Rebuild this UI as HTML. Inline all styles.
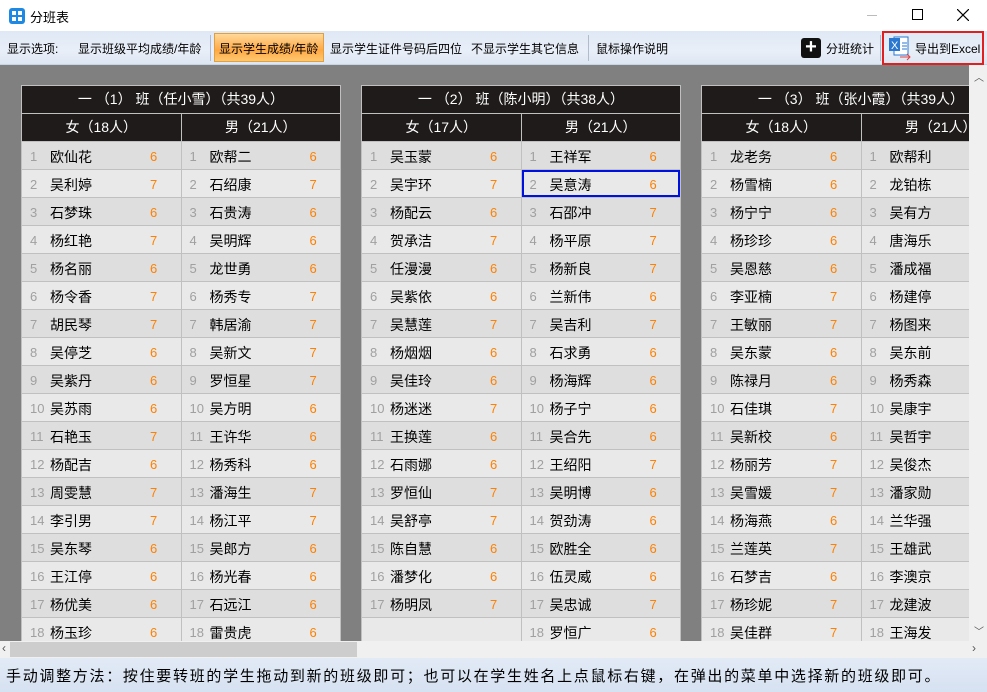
<!DOCTYPE html>
<html><head><meta charset="utf-8"><style>
*{margin:0;padding:0;box-sizing:border-box}
body{width:987px;height:692px;overflow:hidden;font-family:"Liberation Sans","Noto Sans CJK SC",sans-serif;background:#fff;position:relative;font-size:13px;color:#000}
i{font-style:normal}
.title{position:absolute;left:0;top:0;width:987px;height:31px;background:#fff}
.tb{position:absolute;left:0;top:31px;width:987px;height:34px;background:linear-gradient(#dfe8f5,#e9eff8 60%,#dde6f3);border-bottom:1px solid #c8d3e3}
.tb span{position:absolute;top:9px;font-size:12px;white-space:nowrap}
.area{position:absolute;left:0;top:65px;width:969px;height:576px;background:#808080;overflow:hidden}
.p{position:absolute;top:20px;width:320px;background:#c0c0c0;padding:1px;display:flex;flex-direction:column;gap:1px}
.h{height:27px;background:#1f1b1a;color:#fff;font-size:14px;text-align:center;line-height:27px;white-space:nowrap}
.r{display:flex;gap:1px;height:27px}
.r>div{flex:1;position:relative;background:#dedede}
.r:nth-child(even)>div{background:#e9e9e9}
.sh>div{background:#1f1b1a!important;color:#fff;text-align:center;line-height:27px;font-size:14px}
.n{position:absolute;left:8px;top:7px;color:#a0a0a0;font-size:13px}
.m{position:absolute;left:28px;top:5px;font-size:14px}
.s{position:absolute;left:128px;top:7px;color:#ff8000;font-size:13px}
.vs{position:absolute;left:969px;top:65px;width:18px;height:576px;background:#f0f0f0}
.hs{position:absolute;left:0;top:641px;width:987px;height:17px;background:#f0f0f0}
.st{position:absolute;left:0;top:658px;width:987px;height:34px;background:linear-gradient(#e2eaf6,#d6e1f1);font-size:15px;letter-spacing:1.7px;padding:7px 0 0 6px;white-space:nowrap}
</style></head><body>
<div class="title">
<svg style="position:absolute;left:9px;top:8px" width="16" height="16"><rect width="16" height="16" rx="3" fill="#1e88e5"/><rect x="3" y="3" width="4" height="4" fill="#fff"/><rect x="9" y="3" width="4" height="4" fill="#fff"/><rect x="3" y="9" width="4" height="4" fill="#fff"/><rect x="9" y="9" width="4" height="4" fill="#fff"/></svg>
<span style="position:absolute;left:30px;top:7px;font-size:13px">分班表</span>
<div style="position:absolute;left:867px;top:15px;width:10px;height:1px;background:#bbb"></div>
<div style="position:absolute;left:912px;top:9px;width:11px;height:11px;border:1px solid #000"></div>
<svg style="position:absolute;left:957px;top:9px" width="12" height="12"><path d="M0 0L12 12M12 0L0 12" stroke="#000" stroke-width="1.2"/></svg>
</div>
<div class="tb">
<span style="left:7px">显示选项:</span>
<span style="left:78px">显示班级平均成绩/年龄</span>
<div style="position:absolute;left:210px;top:4px;width:1px;height:26px;background:#b0bccc"></div>
<div style="position:absolute;left:214px;top:2px;width:110px;height:29px;background:linear-gradient(#ffd89a,#ffa844 60%,#ffc870);border:1px solid #e0a040"></div>
<span style="left:219px">显示学生成绩/年龄</span>
<span style="left:330px">显示学生证件号码后四位</span>
<span style="left:471px">不显示学生其它信息</span>
<div style="position:absolute;left:588px;top:4px;width:1px;height:26px;background:#b0bccc"></div>
<span style="left:596px">鼠标操作说明</span>
<div style="position:absolute;left:801px;top:7px;width:20px;height:20px;background:#111;border-radius:3px;color:#fff;font-size:20px;line-height:19px;text-align:center;font-weight:bold">+</div>
<span style="left:826px">分班统计</span>
<div style="position:absolute;left:880px;top:4px;width:1px;height:26px;background:#b0bccc"></div>
<div style="position:absolute;left:882px;top:0px;width:102px;height:34px;border:2px solid #e02020"></div>
<svg style="position:absolute;left:888px;top:4px" width="26" height="26"><rect x="6" y="2" width="14" height="18" fill="#fff" stroke="#2a78d0"/><rect x="1" y="3" width="11" height="13" fill="#2a78d0"/><text x="3" y="14" fill="#fff" font-size="11" font-family="Liberation Sans">X</text><path d="M14 8h5M14 11h5M14 14h5" stroke="#2a78d0"/><path d="M12 22h10M19 19l3 3-3 3" stroke="#e04040" fill="none"/></svg>
<span style="left:915px">导出到Excel</span>
</div>
<div class="area">
<div class="p" style="left:21px">
<div class="h">一 （1） 班（任小雪）（共39人）</div>
<div class="r sh"><div>女（18人）</div><div>男（21人）</div></div>
<div class="r"><div><i class="n">1</i><span class="m">欧仙花</span><i class="s">6</i></div><div><i class="n">1</i><span class="m">欧帮二</span><i class="s">6</i></div></div>
<div class="r"><div><i class="n">2</i><span class="m">吴利婷</span><i class="s">7</i></div><div><i class="n">2</i><span class="m">石绍康</span><i class="s">7</i></div></div>
<div class="r"><div><i class="n">3</i><span class="m">石梦珠</span><i class="s">6</i></div><div><i class="n">3</i><span class="m">石贵涛</span><i class="s">6</i></div></div>
<div class="r"><div><i class="n">4</i><span class="m">杨红艳</span><i class="s">7</i></div><div><i class="n">4</i><span class="m">吴明辉</span><i class="s">6</i></div></div>
<div class="r"><div><i class="n">5</i><span class="m">杨名丽</span><i class="s">6</i></div><div><i class="n">5</i><span class="m">龙世勇</span><i class="s">6</i></div></div>
<div class="r"><div><i class="n">6</i><span class="m">杨令香</span><i class="s">7</i></div><div><i class="n">6</i><span class="m">杨秀专</span><i class="s">7</i></div></div>
<div class="r"><div><i class="n">7</i><span class="m">胡民琴</span><i class="s">7</i></div><div><i class="n">7</i><span class="m">韩居渝</span><i class="s">7</i></div></div>
<div class="r"><div><i class="n">8</i><span class="m">吴停芝</span><i class="s">6</i></div><div><i class="n">8</i><span class="m">吴新文</span><i class="s">7</i></div></div>
<div class="r"><div><i class="n">9</i><span class="m">吴紫丹</span><i class="s">6</i></div><div><i class="n">9</i><span class="m">罗恒星</span><i class="s">7</i></div></div>
<div class="r"><div><i class="n">10</i><span class="m">吴苏雨</span><i class="s">6</i></div><div><i class="n">10</i><span class="m">吴方明</span><i class="s">6</i></div></div>
<div class="r"><div><i class="n">11</i><span class="m">石艳玉</span><i class="s">7</i></div><div><i class="n">11</i><span class="m">王许华</span><i class="s">6</i></div></div>
<div class="r"><div><i class="n">12</i><span class="m">杨配吉</span><i class="s">6</i></div><div><i class="n">12</i><span class="m">杨秀科</span><i class="s">6</i></div></div>
<div class="r"><div><i class="n">13</i><span class="m">周雯慧</span><i class="s">7</i></div><div><i class="n">13</i><span class="m">潘海生</span><i class="s">7</i></div></div>
<div class="r"><div><i class="n">14</i><span class="m">李引男</span><i class="s">7</i></div><div><i class="n">14</i><span class="m">杨江平</span><i class="s">7</i></div></div>
<div class="r"><div><i class="n">15</i><span class="m">吴东琴</span><i class="s">6</i></div><div><i class="n">15</i><span class="m">吴郎方</span><i class="s">6</i></div></div>
<div class="r"><div><i class="n">16</i><span class="m">王江停</span><i class="s">6</i></div><div><i class="n">16</i><span class="m">杨光春</span><i class="s">6</i></div></div>
<div class="r"><div><i class="n">17</i><span class="m">杨优美</span><i class="s">6</i></div><div><i class="n">17</i><span class="m">石远江</span><i class="s">6</i></div></div>
<div class="r"><div><i class="n">18</i><span class="m">杨玉珍</span><i class="s">6</i></div><div><i class="n">18</i><span class="m">雷贵虎</span><i class="s">6</i></div></div>
</div>
<div class="p" style="left:361px">
<div class="h">一 （2） 班（陈小明）（共38人）</div>
<div class="r sh"><div>女（17人）</div><div>男（21人）</div></div>
<div class="r"><div><i class="n">1</i><span class="m">吴玉蒙</span><i class="s">6</i></div><div><i class="n">1</i><span class="m">王祥军</span><i class="s">6</i></div></div>
<div class="r"><div><i class="n">2</i><span class="m">吴宇环</span><i class="s">7</i></div><div style="outline:2px solid #0010e0;outline-offset:-2px"><i class="n">2</i><span class="m">吴意涛</span><i class="s">6</i></div></div>
<div class="r"><div><i class="n">3</i><span class="m">杨配云</span><i class="s">6</i></div><div><i class="n">3</i><span class="m">石邵冲</span><i class="s">7</i></div></div>
<div class="r"><div><i class="n">4</i><span class="m">贺承洁</span><i class="s">7</i></div><div><i class="n">4</i><span class="m">杨平原</span><i class="s">7</i></div></div>
<div class="r"><div><i class="n">5</i><span class="m">任漫漫</span><i class="s">6</i></div><div><i class="n">5</i><span class="m">杨新良</span><i class="s">7</i></div></div>
<div class="r"><div><i class="n">6</i><span class="m">吴紫依</span><i class="s">6</i></div><div><i class="n">6</i><span class="m">兰新伟</span><i class="s">6</i></div></div>
<div class="r"><div><i class="n">7</i><span class="m">吴慧莲</span><i class="s">7</i></div><div><i class="n">7</i><span class="m">吴吉利</span><i class="s">7</i></div></div>
<div class="r"><div><i class="n">8</i><span class="m">杨烟烟</span><i class="s">6</i></div><div><i class="n">8</i><span class="m">石求勇</span><i class="s">6</i></div></div>
<div class="r"><div><i class="n">9</i><span class="m">吴佳玲</span><i class="s">6</i></div><div><i class="n">9</i><span class="m">杨海辉</span><i class="s">6</i></div></div>
<div class="r"><div><i class="n">10</i><span class="m">杨迷迷</span><i class="s">7</i></div><div><i class="n">10</i><span class="m">杨子宁</span><i class="s">6</i></div></div>
<div class="r"><div><i class="n">11</i><span class="m">王换莲</span><i class="s">6</i></div><div><i class="n">11</i><span class="m">吴合先</span><i class="s">6</i></div></div>
<div class="r"><div><i class="n">12</i><span class="m">石雨娜</span><i class="s">6</i></div><div><i class="n">12</i><span class="m">王绍阳</span><i class="s">7</i></div></div>
<div class="r"><div><i class="n">13</i><span class="m">罗恒仙</span><i class="s">7</i></div><div><i class="n">13</i><span class="m">吴明博</span><i class="s">6</i></div></div>
<div class="r"><div><i class="n">14</i><span class="m">吴舒亭</span><i class="s">7</i></div><div><i class="n">14</i><span class="m">贺劲涛</span><i class="s">6</i></div></div>
<div class="r"><div><i class="n">15</i><span class="m">陈自慧</span><i class="s">6</i></div><div><i class="n">15</i><span class="m">欧胜全</span><i class="s">6</i></div></div>
<div class="r"><div><i class="n">16</i><span class="m">潘梦化</span><i class="s">6</i></div><div><i class="n">16</i><span class="m">伍灵威</span><i class="s">6</i></div></div>
<div class="r"><div><i class="n">17</i><span class="m">杨明凤</span><i class="s">7</i></div><div><i class="n">17</i><span class="m">吴忠诚</span><i class="s">7</i></div></div>
<div class="r"><div></div><div><i class="n">18</i><span class="m">罗恒广</span><i class="s">6</i></div></div>
</div>
<div class="p" style="left:701px">
<div class="h">一 （3） 班（张小霞）（共39人）</div>
<div class="r sh"><div>女（18人）</div><div>男（21人）</div></div>
<div class="r"><div><i class="n">1</i><span class="m">龙老务</span><i class="s">6</i></div><div><i class="n">1</i><span class="m">欧帮利</span></div></div>
<div class="r"><div><i class="n">2</i><span class="m">杨雪楠</span><i class="s">6</i></div><div><i class="n">2</i><span class="m">龙铂栋</span></div></div>
<div class="r"><div><i class="n">3</i><span class="m">杨宁宁</span><i class="s">6</i></div><div><i class="n">3</i><span class="m">吴有方</span></div></div>
<div class="r"><div><i class="n">4</i><span class="m">杨珍珍</span><i class="s">6</i></div><div><i class="n">4</i><span class="m">唐海乐</span></div></div>
<div class="r"><div><i class="n">5</i><span class="m">吴恩慈</span><i class="s">6</i></div><div><i class="n">5</i><span class="m">潘成福</span></div></div>
<div class="r"><div><i class="n">6</i><span class="m">李亚楠</span><i class="s">7</i></div><div><i class="n">6</i><span class="m">杨建停</span></div></div>
<div class="r"><div><i class="n">7</i><span class="m">王敏丽</span><i class="s">7</i></div><div><i class="n">7</i><span class="m">杨图来</span></div></div>
<div class="r"><div><i class="n">8</i><span class="m">吴东蒙</span><i class="s">6</i></div><div><i class="n">8</i><span class="m">吴东前</span></div></div>
<div class="r"><div><i class="n">9</i><span class="m">陈禄月</span><i class="s">6</i></div><div><i class="n">9</i><span class="m">杨秀森</span></div></div>
<div class="r"><div><i class="n">10</i><span class="m">石佳琪</span><i class="s">7</i></div><div><i class="n">10</i><span class="m">吴康宇</span></div></div>
<div class="r"><div><i class="n">11</i><span class="m">吴新校</span><i class="s">6</i></div><div><i class="n">11</i><span class="m">吴哲宇</span></div></div>
<div class="r"><div><i class="n">12</i><span class="m">杨丽芳</span><i class="s">7</i></div><div><i class="n">12</i><span class="m">吴俊杰</span></div></div>
<div class="r"><div><i class="n">13</i><span class="m">吴雪媛</span><i class="s">7</i></div><div><i class="n">13</i><span class="m">潘家勋</span></div></div>
<div class="r"><div><i class="n">14</i><span class="m">杨海燕</span><i class="s">6</i></div><div><i class="n">14</i><span class="m">兰华强</span></div></div>
<div class="r"><div><i class="n">15</i><span class="m">兰莲英</span><i class="s">7</i></div><div><i class="n">15</i><span class="m">王雄武</span></div></div>
<div class="r"><div><i class="n">16</i><span class="m">石梦吉</span><i class="s">6</i></div><div><i class="n">16</i><span class="m">李澳京</span></div></div>
<div class="r"><div><i class="n">17</i><span class="m">杨珍妮</span><i class="s">7</i></div><div><i class="n">17</i><span class="m">龙建波</span></div></div>
<div class="r"><div><i class="n">18</i><span class="m">吴佳群</span><i class="s">7</i></div><div><i class="n">18</i><span class="m">王海发</span></div></div>
</div>
</div>
<div class="vs"><span style="position:absolute;left:5px;top:4px;font-size:10px;color:#555">︿</span><span style="position:absolute;left:5px;top:558px;font-size:10px;color:#555">﹀</span></div>
<div class="hs"><div style="position:absolute;left:10px;top:1px;width:347px;height:15px;background:#cdcdcd"></div><span style="position:absolute;left:2px;top:0;font-size:12px;color:#555">‹</span><span style="position:absolute;left:972px;top:0;font-size:12px;color:#555">›</span></div>
<div class="st">手动调整方法：按住要转班的学生拖动到新的班级即可；也可以在学生姓名上点鼠标右键，在弹出的菜单中选择新的班级即可。</div>
</body></html>
